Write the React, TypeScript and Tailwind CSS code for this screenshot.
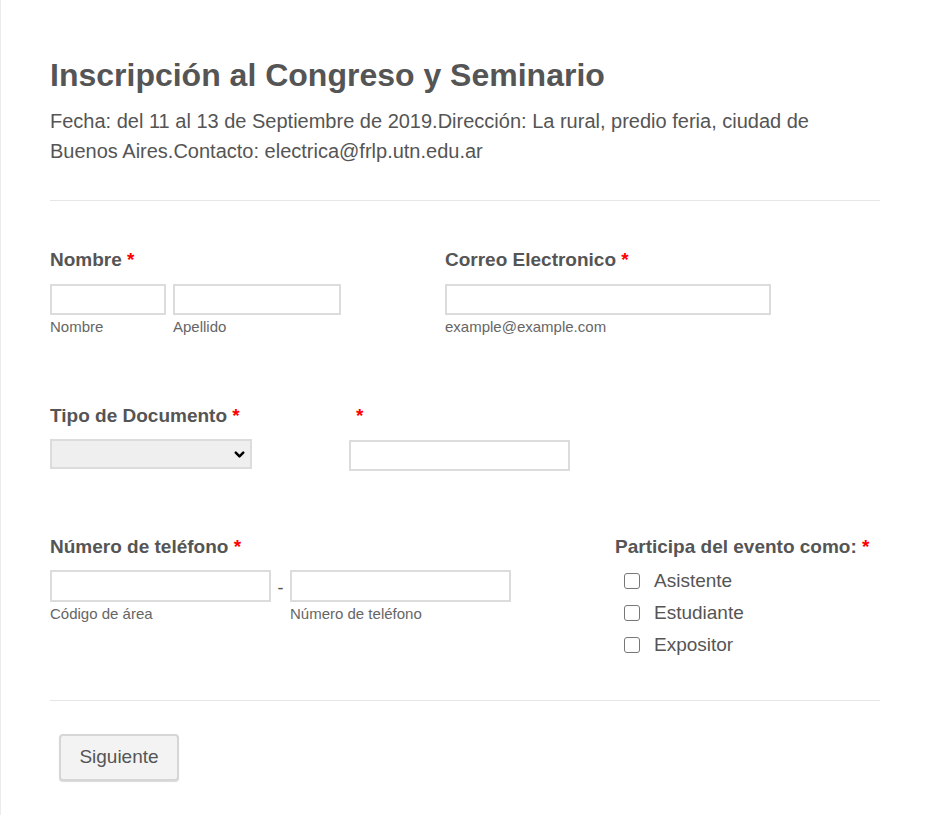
import React from 'react';
import { ChevronDown } from 'lucide-react';

const Req = () => <span className="text-[#f00]"> *</span>;

const inputCls = 'block border-2 border-[#dcdcdc] bg-white outline-none';
const subCls = 'text-[15px] leading-[18px] mt-[3px] text-[#666]';
const labelCls = 'text-[19px] leading-[24px] font-bold';

const App: React.FC = () => {
    return (
        <div className="min-h-[815px] bg-white border-l border-[#ececec] text-[#555] font-['Liberation_Sans',Arial,sans-serif]">
            <div className="w-[830px] ml-[49px] pt-[57px]">
                <h1 className="text-[32px] leading-[36px] font-bold">Inscripción al Congreso y Seminario</h1>
                <p className="mt-[13px] text-[20px] leading-[30px] w-[790px]">
                    Fecha: del 11 al 13 de Septiembre de 2019.Dirección: La rural, predio feria, ciudad de Buenos Aires.Contacto: electrica@frlp.utn.edu.ar
                </p>
                <div className="mt-[34px] h-px bg-[#e6e6e6]" />

                {/* fila 1 */}
                <div className="flex mt-[47px]">
                    <div className="w-[395px]">
                        <div className={labelCls}>Nombre<Req /></div>
                        <div className="flex gap-[7px] mt-[12px]">
                            <div>
                                <input className={`${inputCls} w-[116px] h-[31px]`} />
                                <div className={subCls}>Nombre</div>
                            </div>
                            <div>
                                <input className={`${inputCls} w-[168px] h-[31px]`} />
                                <div className={subCls}>Apellido</div>
                            </div>
                        </div>
                    </div>
                    <div>
                        <div className={labelCls}>Correo Electronico<Req /></div>
                        <input className={`${inputCls} w-[326px] h-[31px] mt-[12px]`} />
                        <div className={subCls}>example@example.com</div>
                    </div>
                </div>

                {/* fila 2 */}
                <div className="flex mt-[68px]">
                    <div className="w-[299px]">
                        <div className={labelCls}>Tipo de Documento<Req /></div>
                        <div className="relative w-[202px] mt-[11px]">
                            <select className="block appearance-none w-[202px] h-[30px] border-2 border-[#dcdcdc] bg-[#efefef] outline-none" />
                            <ChevronDown className="absolute right-[5px] top-[8px] w-[15px] h-[15px] text-black" strokeWidth={4} />
                        </div>
                    </div>
                    <div>
                        <div className={`${labelCls} pl-[7px]`}><span className="text-[#f00]">*</span></div>
                        <input className={`${inputCls} w-[221px] h-[31px] mt-[12px]`} />
                    </div>
                </div>

                {/* fila 3 */}
                <div className="flex mt-[64px]">
                    <div className="w-[565px]">
                        <div className={labelCls}>Número de teléfono<Req /></div>
                        <div className="flex mt-[11px]">
                            <div>
                                <input className={`${inputCls} w-[221px] h-[32px]`} />
                                <div className={subCls}>Código de área</div>
                            </div>
                            <div className="w-[19px] text-center text-[18px] leading-[36px]">-</div>
                            <div>
                                <input className={`${inputCls} w-[221px] h-[32px]`} />
                                <div className={subCls}>Número de teléfono</div>
                            </div>
                        </div>
                    </div>
                    <div>
                        <div className={labelCls}>Participa del evento como:<Req /></div>
                        <div className="mt-[6px] pl-[9px]">
                            {['Asistente', 'Estudiante', 'Expositor'].map(op => (
                                <label key={op} className="flex items-center h-[32px] text-[19px]">
                                    <span className="w-[16px] h-[16px] border border-[#777] rounded-[3px] bg-white" />
                                    <span className="ml-[14px]">{op}</span>
                                </label>
                            ))}
                        </div>
                    </div>
                </div>

                <div className="mt-[39px] h-px bg-[#e6e6e6]" />
                <button className="mt-[33px] ml-[9px] w-[120px] h-[47px] bg-[#f3f3f3] border-2 border-[#d6d6d6] rounded-[4px] text-[19px] text-[#555] shadow-[0_1px_1px_rgba(0,0,0,0.15)]">
                    Siguiente
                </button>
            </div>
        </div>
    );
};

export default App;
